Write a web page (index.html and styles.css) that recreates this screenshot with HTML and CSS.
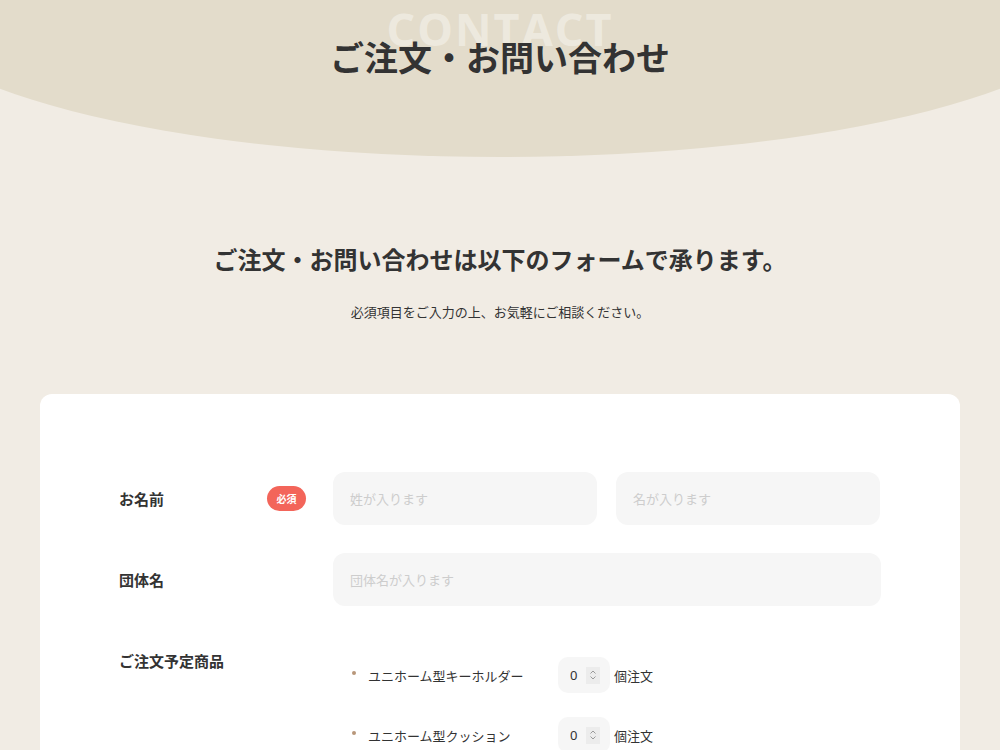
FILE: index.html
```html
<!DOCTYPE html>
<html lang="ja">
<head>
  <meta charset="UTF-8">
  <meta name="viewport" content="width=device-width, initial-scale=1.0">
  <title>ご注文・お問い合わせ</title>
  <link rel="stylesheet" href="styles.css">
</head>
<body>
  <header class="page-head">
    <span class="head-en">CONTACT</span>
    <h1>ご注文・お問い合わせ</h1>
  </header>

  <section class="intro">
    <h2>ご注文・お問い合わせは以下のフォームで承ります。</h2>
    <p>必須項目をご入力の上、お気軽にご相談ください。</p>
  </section>

  <div class="card">
    <form class="order-form">
      <div class="form-row">
        <div class="label-cell">
          <label for="last">お名前</label>
          <span class="badge">必須</span>
        </div>
        <div class="name-group">
          <input type="text" id="last" placeholder="姓が入ります">
          <input type="text" id="first" placeholder="名が入ります">
        </div>
      </div>

      <div class="form-row">
        <div class="label-cell">
          <label for="org">団体名</label>
        </div>
        <input type="text" id="org" placeholder="団体名が入ります">
      </div>

      <div class="form-row">
        <div class="label-cell">
          <label>ご注文予定商品</label>
        </div>
        <ul class="items">
          <li class="item">
            <span class="item-name">ユニホーム型キーホルダー</span>
            <span class="qty">0
              <span class="spin">
                <svg width="8" height="12" viewBox="0 0 8 12"><path d="M1.5 4.5 4 2l2.5 2.5M1.5 7.5 4 10l2.5-2.5" fill="none" stroke="#9a9a9a" stroke-width="1"/></svg>
              </span>
            </span>
            <span class="unit">個注文</span>
          </li>
          <li class="item">
            <span class="item-name">ユニホーム型クッション</span>
            <span class="qty">0
              <span class="spin">
                <svg width="8" height="12" viewBox="0 0 8 12"><path d="M1.5 4.5 4 2l2.5 2.5M1.5 7.5 4 10l2.5-2.5" fill="none" stroke="#9a9a9a" stroke-width="1"/></svg>
              </span>
            </span>
            <span class="unit">個注文</span>
          </li>
        </ul>
      </div>
    </form>
  </div>
</body>
</html>
```

FILE: styles.css
```css
/* Reset and global styles */
* {
  margin: 0;
  padding: 0;
  box-sizing: border-box;
}
body {
  font-family: 'Noto Sans CJK JP', 'Noto Sans', sans-serif;
  background: #f1ece4;
  color: #333;
  overflow: hidden;
}

/* Header with curved bottom */
.page-head {
  position: relative;
  height: 157px;
  padding-top: 33px;
  background: #e3dccb;
  clip-path: ellipse(606px 157px at 50% 0);
  text-align: center;
}
.head-en {
  position: absolute;
  top: 4px;
  left: 0;
  right: 0;
  font-family: 'Open Sans', sans-serif;
  font-size: 45px;
  font-weight: 700;
  line-height: 50px;
  letter-spacing: 2px;
  color: rgba(255, 255, 255, 0.4);
}
.page-head h1 {
  position: relative;
  font-size: 34px;
  font-weight: 700;
  line-height: 48px;
  color: #333;
}

/* Intro */
.intro {
  padding-top: 85px;
  text-align: center;
}
.intro h2 {
  font-size: 24px;
  font-weight: 700;
  line-height: 34px;
}
.intro p {
  margin-top: 24px;
  font-size: 13px;
  line-height: 24px;
}

/* Card */
.card {
  margin: 70px 40px 0;
  background: #fff;
  border-radius: 12px;
  padding: 78px 79px 80px;
}
.order-form {
  display: flex;
  flex-direction: column;
  gap: 28px;
}
.form-row {
  display: grid;
  grid-template-columns: 187px 1fr;
  column-gap: 27px;
  align-items: start;
}
.label-cell {
  height: 53px;
  display: flex;
  align-items: center;
  justify-content: space-between;
}
.label-cell label {
  font-size: 15px;
  font-weight: 700;
}
.badge {
  width: 39px;
  height: 25px;
  border-radius: 13px;
  background: #f3655a;
  color: #fff;
  font-size: 10px;
  font-weight: 700;
  display: flex;
  align-items: center;
  justify-content: center;
}
.name-group {
  display: flex;
  gap: 19px;
}
input {
  width: 100%;
  height: 53px;
  border: none;
  border-radius: 12px;
  background: #f6f6f6;
  padding: 0 17px;
  font-family: inherit;
  font-size: 13px;
  color: #333;
  outline: none;
}
input::placeholder {
  color: #cdcdcd;
}
.name-group input {
  width: 264px;
}

/* Product list */
.items {
  list-style: none;
  padding: 23px 0 0 19px;
  display: flex;
  flex-direction: column;
  gap: 24px;
}
.item {
  display: flex;
  align-items: center;
  font-size: 13px;
}
.item::before {
  content: '';
  width: 4px;
  height: 4px;
  border-radius: 50%;
  background: #b8977a;
  margin: -4px 12px 0 0;
}
.item-name {
  width: 190px;
}
.qty {
  width: 52px;
  height: 36px;
  border-radius: 10px;
  background: #f6f6f6;
  display: flex;
  align-items: center;
  padding-left: 12px;
  font-family: 'Noto Sans', sans-serif;
  font-size: 13px;
}
.spin {
  margin-left: 9px;
  width: 14px;
  height: 17px;
  background: #ececec;
  display: flex;
  align-items: center;
  justify-content: center;
}
.unit {
  margin-left: 4px;
}
```
